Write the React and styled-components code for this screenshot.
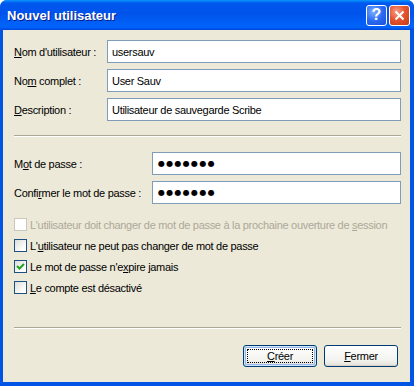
import React from 'react';
import styled, { createGlobalStyle } from 'styled-components';

const GlobalStyle = createGlobalStyle`
  html, body {
    margin: 0;
    padding: 0;
    background: #ffffff;
  }
  #root {
    width: 414px;
    height: 386px;
  }
`;

const Window = styled.div`
  width: 414px;
  height: 386px;
  display: flex;
  flex-direction: column;
  background: #0055e5;
  border-radius: 7px 7px 0 0;
  overflow: hidden;
  box-sizing: border-box;
  font-family: Tahoma, "Liberation Sans", Arial, sans-serif;
  font-size: 11px;
  letter-spacing: -0.3px;
  color: #000;
`;

const TitleBar = styled.div`
  height: 30px;
  flex-shrink: 0;
  display: flex;
  align-items: center;
  padding: 0 4px 0 7px;
  background: linear-gradient(
    to bottom,
    #0a97ff 0%,
    #0058ee 10%,
    #0053ea 45%,
    #0063fa 85%,
    #0060f8 92%,
    #0045d8 100%
  );
`;

const Title = styled.div`
  color: #fff;
  font-family: "Trebuchet MS", "Liberation Sans", Arial, sans-serif;
  font-weight: bold;
  font-size: 13px;
  letter-spacing: 0;
  text-shadow: 1px 1px 0 #0a1c8a;
`;

const Controls = styled.div`
  margin-left: auto;
  display: flex;
  gap: 2px;
`;

const CtrlButton = styled.div`
  width: 21px;
  height: 21px;
  box-sizing: border-box;
  border: 1px solid #fff;
  border-radius: 3px;
  display: flex;
  align-items: center;
  justify-content: center;
  color: #fff;
  font-family: "Liberation Sans", Arial, sans-serif;
  font-weight: bold;
  font-size: 16px;
  letter-spacing: 0;
  background: ${({ $danger }) =>
    $danger
      ? 'radial-gradient(circle at 35% 30%, #f5a08a 0%, #e5542f 45%, #c73a17 100%)'
      : 'radial-gradient(circle at 35% 30%, #7fb0ff 0%, #2a6bf2 50%, #1a4fd8 100%)'};
`;

const Body = styled.div`
  flex: 1;
  margin: 0 4px 4px 3px;
  background: #ece9d8;
  display: flex;
  flex-direction: column;
  padding: 10px 9px 15px 11px;
`;

const Fields = styled.div`
  display: grid;
  grid-template-columns: ${({ $label }) => $label}px 1fr;
  row-gap: 6px;
  align-items: center;
`;

const Label = styled.div`
  white-space: nowrap;
`;

const TextBox = styled.div`
  height: 23px;
  box-sizing: border-box;
  border: 1px solid #7f9db9;
  background: #fff;
  padding: 0 4px;
  display: flex;
  align-items: center;
  white-space: nowrap;
`;

const Dots = styled.span`
  font-family: "DejaVu Sans", sans-serif;
  font-size: 8px;
  letter-spacing: 1.3px;
  padding-left: 1px;
`;

const Separator = styled.div`
  border-top: 1px solid #aca899;
  border-bottom: 1px solid #fff;
  margin: ${({ $m }) => $m};
`;

const Options = styled.div`
  display: flex;
  flex-direction: column;
  margin-top: 10px;
`;

const Option = styled.div`
  height: 21px;
  display: flex;
  align-items: center;
  gap: 3px;
  color: ${({ $disabled }) => ($disabled ? '#aca899' : '#000')};
`;

const Box = styled.span`
  width: 13px;
  height: 13px;
  box-sizing: border-box;
  border: 1px solid ${({ $disabled }) => ($disabled ? '#cac8bb' : '#1c5180')};
  background: ${({ $disabled }) =>
    $disabled ? '#fff' : 'linear-gradient(135deg, #dcdcd7 0%, #ffffff 80%)'};
  display: flex;
  align-items: center;
  justify-content: center;
  flex-shrink: 0;
`;

const Key = styled.u`
  text-decoration: underline;
`;

const Footer = styled.div`
  margin-top: auto;
  display: flex;
  flex-direction: column;
`;

const Buttons = styled.div`
  display: flex;
  justify-content: flex-end;
  gap: 7px;
  padding-right: 3px;
`;

const Button = styled.div`
  position: relative;
  width: 74px;
  height: 22px;
  box-sizing: border-box;
  border: 1px solid #003c74;
  border-radius: 3px;
  background: linear-gradient(to bottom, #ffffff 0%, #f3f3ef 70%, #e3e1d8 100%);
  display: flex;
  align-items: center;
  justify-content: center;
  box-shadow: ${({ $default }) =>
    $default ? 'inset 0 0 0 1px #cee7ff, inset 0 0 0 2px #98b8ea' : 'inset 0 -1px 0 #d6d0c5'};

  ${({ $default }) =>
    $default &&
    `
    &::after {
      content: '';
      position: absolute;
      inset: 3px;
      border: 1px dotted #000;
    }
  `}
`;

const Check = () => (
  <svg width="9" height="9" viewBox="0 0 9 9">
    <path d="M1 4 L3.5 6.5 L8 2" fill="none" stroke="#21a121" strokeWidth="2" />
  </svg>
);

const App = () => {
  return (
    <>
      <GlobalStyle />
      <Window>
        <TitleBar>
          <Title>Nouvel utilisateur</Title>
          <Controls>
            <CtrlButton>?</CtrlButton>
            <CtrlButton $danger>
              <svg width="11" height="11" viewBox="0 0 11 11">
                <path d="M1.5 1.5 L9.5 9.5 M9.5 1.5 L1.5 9.5" stroke="#fff" strokeWidth="2" />
              </svg>
            </CtrlButton>
          </Controls>
        </TitleBar>
        <Body>
          <Fields $label={93}>
            <Label><Key>N</Key>om d'utilisateur :</Label>
            <TextBox>usersauv</TextBox>
            <Label>No<Key>m</Key> complet :</Label>
            <TextBox>User Sauv</TextBox>
            <Label><Key>D</Key>escription :</Label>
            <TextBox>Utilisateur de sauvegarde Scribe</TextBox>
          </Fields>
          <Separator $m="14px 0 15px 0" />
          <Fields $label={138}>
            <Label>M<Key>o</Key>t de passe :</Label>
            <TextBox><Dots>●●●●●●●</Dots></TextBox>
            <Label>Confi<Key>r</Key>mer le mot de passe :</Label>
            <TextBox><Dots>●●●●●●●</Dots></TextBox>
          </Fields>
          <Options>
            <Option $disabled>
              <Box $disabled />
              <span>L'utilisateur doit changer de mot de passe à la prochaine ouverture de <Key>s</Key>ession</span>
            </Option>
            <Option>
              <Box />
              <span>L'<Key>u</Key>tilisateur ne peut pas changer de mot de passe</span>
            </Option>
            <Option>
              <Box><Check /></Box>
              <span>Le mot de passe n'e<Key>x</Key>pire jamais</span>
            </Option>
            <Option>
              <Box />
              <span><Key>L</Key>e compte est désactivé</span>
            </Option>
          </Options>
          <Footer>
            <Separator $m="0 0 16px 0" />
            <Buttons>
              <Button $default><span><Key>C</Key>réer</span></Button>
              <Button><span><Key>F</Key>ermer</span></Button>
            </Buttons>
          </Footer>
        </Body>
      </Window>
    </>
  );
};

export default App;
